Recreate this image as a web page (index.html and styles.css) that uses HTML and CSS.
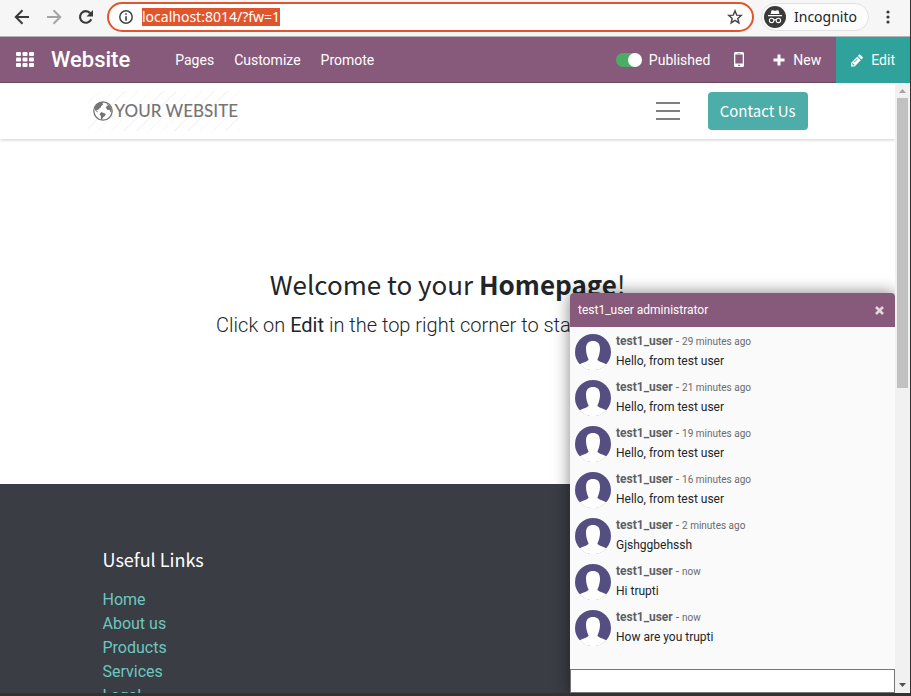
FILE: index.html
```html
<!DOCTYPE html>
<html lang="en">
<head>
<meta charset="utf-8">
<title>Website</title>
<link rel="stylesheet" href="styles.css">
</head>
<body>
<svg class="defs" aria-hidden="true">
  <symbol id="avatar" viewBox="0 0 36 36">
    <circle cx="18" cy="18" r="18" fill="#544f80"/>
    <path fill="#fff" d="M4.600 30.300C8 28.300 13 27.500 13.600 25.400 12 22.500 11 18.500 11 14.500 11 9.300 13.800 7 18 7s7 2.300 7 7.500c0 4-1 8-2.600 10.900.6 2.100 5.600 2.900 9 4.900A18.200 18.200 0 0 1 4.600 30.300z"/>
  </symbol>
</svg>
<div class="browser">
  <div class="toolbar">
    <button class="tool" aria-label="Back"><svg width="16" height="16" viewBox="0 0 16 16" fill="none" stroke="#3a3a3a" stroke-width="2"><path d="M15 8H2M8.500 1.300 1.800 8l6.700 6.700"/></svg></button>
    <button class="tool" aria-label="Forward"><svg width="16" height="16" viewBox="0 0 16 16" fill="none" stroke="#a5a5a5" stroke-width="2"><path d="M1 8h13M7.500 1.300 14.200 8l-6.700 6.700"/></svg></button>
    <button class="tool" aria-label="Reload"><svg width="16" height="16" viewBox="0 0 16 16"><path d="M13.200 10.200A5.800 5.800 0 1 1 12.300 4.200" fill="none" stroke="#3a3a3a" stroke-width="2.200"/><path d="M15 1v6.500H8.500z" fill="#3a3a3a"/></svg></button>
    <div class="address">
      <svg width="14" height="14" viewBox="0 0 14 14"><circle cx="7" cy="7" r="6.200" fill="none" stroke="#444" stroke-width="1.500"/><path d="M6.200 3.200h1.700v1.600H6.200zM6.200 6.200h1.700v4.600H6.200z" fill="#444"/></svg>
      <a class="url" href="#">localhost:8014/?fw=1</a>
      <svg class="star" width="16" height="16" viewBox="0 0 16 16"><path d="m8 1.800 1.700 4.300 4.600.3-3.500 3 1.100 4.500L8 11.400l-3.900 2.500 1.100-4.500-3.500-3 4.600-.3z" fill="none" stroke="#444" stroke-width="1.400"/></svg>
    </div>
    <div class="incognito">
      <svg width="22" height="22" viewBox="0 0 22 22"><circle cx="11" cy="11" r="11" fill="#3a3a3a"/><path d="M7.500 4.600c.8-.6 1.500-.4 2.200-.2.900.3 1.700.3 2.600 0 .7-.2 1.500-.4 2.200.2L15.500 8h-9zM4 9h14v1.300H4z" fill="#fff"/><g fill="none" stroke="#fff" stroke-width="1.100"><circle cx="7.600" cy="14.400" r="2.200"/><circle cx="14.400" cy="14.400" r="2.200"/><path d="M9.800 14c.7-.5 1.700-.5 2.400 0"/></g></svg>
      <span>Incognito</span>
    </div>
    <button class="menu-dots" aria-label="Browser menu"><svg width="4" height="14" viewBox="0 0 4 14" fill="#3a3a3a"><circle cx="2" cy="2" r="1.600"/><circle cx="2" cy="7" r="1.600"/><circle cx="2" cy="12" r="1.600"/></svg></button>
  </div>

  <nav class="navbar">
    <button class="apps" aria-label="Apps"><svg width="18" height="15" viewBox="0 0 18 15" fill="#fff"><rect width="5" height="4" rx="1"/><rect x="6.500" width="5" height="4" rx="1"/><rect x="13" width="5" height="4" rx="1"/><rect y="5.500" width="5" height="4" rx="1"/><rect x="6.500" y="5.500" width="5" height="4" rx="1"/><rect x="13" y="5.500" width="5" height="4" rx="1"/><rect y="11" width="5" height="4" rx="1"/><rect x="6.500" y="11" width="5" height="4" rx="1"/><rect x="13" y="11" width="5" height="4" rx="1"/></svg></button>
    <a class="brand" href="#">Website</a>
    <a class="nav-link" href="#">Pages</a>
    <a class="nav-link" href="#">Customize</a>
    <a class="nav-link" href="#">Promote</a>
    <label class="publish"><input class="switch" type="checkbox" checked>Published</label>
    <button class="phone" aria-label="Mobile preview"><svg width="10" height="15" viewBox="0 0 10 15"><path fill="#fff" fill-rule="evenodd" d="M1.500 0h7A1.500 1.500 0 0 1 10 1.500v12A1.500 1.500 0 0 1 8.500 15h-7A1.500 1.500 0 0 1 0 13.500v-12A1.500 1.500 0 0 1 1.500 0zM1.300 2.500v9h7.400v-9zM3.500.9v.6h3V.9zM5 12.400a.9.900 0 1 0 0 1.800.9.900 0 0 0 0-1.800z"/></svg></button>
    <button class="new"><svg width="12" height="12" viewBox="0 0 12 12"><path d="M4.500.5h3v4h4v3h-4v4h-3v-4h-4v-3h4z" fill="#fff"/></svg>New</button>
    <button class="edit"><svg width="12" height="13" viewBox="0 0 12 13" fill="#fff"><path d="m9.300.8 2.300 2.300c.4.400.4.900 0 1.300l-1.100 1.100-3.600-3.600L8 .8c.4-.4.900-.4 1.300 0z"/><path fill-rule="evenodd" d="m6.200 2.700 3.600 3.600L3.600 12.500H0V8.900zM1.100 9.700v.8h1v1h.8l.6-.6-1.800-1.800zM2.900 7.900l.5.500 3.200-3.200-.5-.5z"/></svg>Edit</button>
  </nav>

  <div class="viewport">
    <div class="page">
      <header class="site-header">
        <div class="container header-row">
          <a class="logo" href="#"><svg width="20" height="20" viewBox="0 0 20 20"><circle cx="10" cy="10" r="9.200" fill="#fff" stroke="#757575" stroke-width="1.300"/><path fill="#757575" d="M2.600 5C4.300 2.600 6.800 1 9.800 1l1 .9-1.600.6 1 1-2 1.600-.4 1.400L5.600 7.900l-.4 1.300-1.400-.4-.3 1 1.400.9-.2.700-2.300-1.600L1.700 7zM8.300 11l2.400.9 2.200 1.200-1 2-1.600.8-1.100 2.600-1.200-.2-.2-3.200-1.300-1.800zM13.200 2.200l3.600 2.700 1.800 3.700-.3 3.200-1.300-1.300-.2-1.500-2.600-.2-1.300-2.200.9-1.700 1.200-.2-.8-.9z"/></svg>YOUR WEBSITE</a>
          <button class="burger" aria-label="Menu"><span></span><span></span><span></span></button>
          <a class="contact" href="#">Contact Us</a>
        </div>
      </header>
      <main class="hero">
        <h1>Welcome to your <b>Homepage</b>!</h1>
        <p>Click on <b>Edit</b> in the top right corner to start designing.</p>
      </main>
      <footer class="footer">
        <div class="container footer-col">
          <h2>Useful Links</h2>
          <ul>
            <li><a href="#">Home</a></li>
            <li><a href="#">About us</a></li>
            <li><a href="#">Products</a></li>
            <li><a href="#">Services</a></li>
            <li><a href="#">Legal</a></li>
          </ul>
        </div>
      </footer>
      <section class="chat">
        <div class="chat-head"><span>test1_user administrator</span>
          <button aria-label="Close chat"><svg width="9" height="9" viewBox="0 0 9 9"><path d="m1 1 7 7M8 1 1 8" stroke="#e3d6df" stroke-width="2.600"/></svg></button></div>
        <div class="messages">
          <div class="message"><svg class="avatar"><use href="#avatar"/></svg><div><p class="meta"><b>test1_user</b> - <small>29 minutes ago</small></p><p>Hello, from test user</p></div></div>
          <div class="message"><svg class="avatar"><use href="#avatar"/></svg><div><p class="meta"><b>test1_user</b> - <small>21 minutes ago</small></p><p>Hello, from test user</p></div></div>
          <div class="message"><svg class="avatar"><use href="#avatar"/></svg><div><p class="meta"><b>test1_user</b> - <small>19 minutes ago</small></p><p>Hello, from test user</p></div></div>
          <div class="message"><svg class="avatar"><use href="#avatar"/></svg><div><p class="meta"><b>test1_user</b> - <small>16 minutes ago</small></p><p>Hello, from test user</p></div></div>
          <div class="message"><svg class="avatar"><use href="#avatar"/></svg><div><p class="meta"><b>test1_user</b> - <small>2 minutes ago</small></p><p>Gjshggbehssh</p></div></div>
          <div class="message"><svg class="avatar"><use href="#avatar"/></svg><div><p class="meta"><b>test1_user</b> - <small>now</small></p><p>Hi trupti</p></div></div>
          <div class="message"><svg class="avatar"><use href="#avatar"/></svg><div><p class="meta"><b>test1_user</b> - <small>now</small></p><p>How are you trupti</p></div></div>
        </div>
        <input class="composer" type="text" aria-label="Message">
      </section>
    </div>
    <div class="scrollbar" aria-hidden="true">
      <svg width="7" height="4" viewBox="0 0 7 4"><path d="M0 4h7L3.500 0z" fill="#a3a3a3"/></svg>
      <div class="track"><div class="thumb"></div></div>
      <svg width="7" height="4" viewBox="0 0 7 4"><path d="M0 0h7L3.500 4z" fill="#505050"/></svg>
    </div>
  </div>
</div>
</body>
</html>
```
FILE: styles.css
```css
* { box-sizing: border-box; }

body, h1, h2, p, ul { margin: 0; padding: 0; }

body {
  font-family: Roboto, "Liberation Sans", sans-serif;
  font-size: 16px;
  line-height: 24px;
  color: #212529;
}

a { color: inherit; text-decoration: none; }

button {
  padding: 0;
  border: 0;
  background: none;
  color: inherit;
  font: inherit;
}

svg { display: block; flex: none; }

.defs { position: absolute; width: 0; height: 0; }

.browser {
  display: flex;
  flex-direction: column;
  height: 100vh;
  overflow: hidden;
  border-right: 1px solid #333132;
  border-bottom: 3px solid #333132;
}

/* Browser toolbar */
.toolbar {
  display: flex;
  align-items: center;
  flex: none;
  height: 37px;
  padding: 0 20px 3px 14px;
  background: #f6f6f6;
  border-bottom: 1px solid #b5b3b5;
  font-family: "Noto Sans", sans-serif;
}

.tool { margin-right: 16px; }

.address {
  display: flex;
  align-items: center;
  flex: 1;
  gap: 9px;
  height: 30px;
  margin-left: -3px;
  padding: 0 9px 0 10px;
  border: 2px solid #e0552c;
  border-radius: 15px;
  background: #fff;
}

.url {
  height: 18px;
  background: #e0552c;
  color: #fff;
  font-size: 14px;
  line-height: 18px;
}

.star { margin-left: auto; }

.incognito {
  display: flex;
  align-items: center;
  gap: 8px;
  height: 28px;
  margin-left: 7px;
  padding: 0 11px 0 2px;
  border: 1px solid #e2e2e2;
  border-radius: 14px;
  background: #fcfcfc;
  font-size: 14px;
}

.menu-dots { margin-left: 17px; }

/* Application bar */
.navbar {
  display: flex;
  align-items: center;
  flex: none;
  height: 46px;
  padding-left: 16px;
  background: #875a7b;
  border-bottom: 1px solid #68465f;
  color: #fff;
  font-size: 14px;
}

.brand {
  margin: 0 35px 0 17px;
  font-size: 22px;
  font-weight: 500;
}

.nav-link { padding: 0 10px; }

.publish {
  display: flex;
  align-items: center;
  gap: 7px;
  margin-left: auto;
}

.switch {
  appearance: none;
  display: flex;
  justify-content: flex-end;
  width: 26px;
  height: 14px;
  margin: 0;
  border-radius: 7px;
  background: #4aad65;
}

.switch::before {
  content: "";
  width: 14px;
  height: 14px;
  border-radius: 50%;
  background: #fff;
}

.phone { margin: 0 29px 0 24px; }

.new, .edit {
  display: flex;
  align-items: center;
  gap: 8px;
}

.edit {
  height: 46px;
  margin: 0 0 -1px 15px;
  padding: 0 15px;
  background: #30a29c;
}

/* Page viewport */
.viewport {
  display: flex;
  flex: 1;
  min-height: 0;
}

.page {
  position: relative;
  flex: 1;
  overflow: hidden;
  background: #fff;
}

.container {
  width: 100%;
  max-width: 720px;
  margin: 0 auto;
}

.site-header {
  padding: 8px 0;
  box-shadow: 0 1px 3px rgba(0, 0, 0, 0.2);
}

.header-row {
  display: flex;
  align-items: center;
  height: 40px;
}

.logo {
  display: flex;
  align-items: center;
  gap: 2px;
  height: 40px;
  padding: 0 2px 0 5px;
  background: repeating-linear-gradient(135deg, #fff 0 8px, #f5f5f5 8px 9px);
  color: #757575;
  font-family: Lato, sans-serif;
  font-size: 17px;
  font-weight: 500;
}

.burger {
  display: grid;
  gap: 6px;
  width: 24px;
  margin: 0 28px 0 auto;
}

.burger span { height: 2px; background: #808080; }

.contact {
  padding: 7px 12px;
  border-radius: 4px;
  background: #4dada9;
  color: #fff;
  font-family: "Noto Sans CJK SC", sans-serif;
  font-size: 15px;
}

.hero {
  padding: 128px 0 144px;
  text-align: center;
}

.hero h1 {
  margin-bottom: 9px;
  font-family: "Noto Sans CJK SC", sans-serif;
  font-size: 26px;
  font-weight: 400;
  line-height: 34px;
}

.hero h1 b { font-weight: 700; }

.hero p {
  font-size: 20px;
  font-weight: 300;
  line-height: 30px;
}

.hero p b { font-weight: 400; }

.footer {
  height: 300px;
  padding-top: 63px;
  background: #3a3d44;
}

.footer-col { padding: 0 15px; }

.footer h2 {
  margin-bottom: 17px;
  color: #fff;
  font-family: "Noto Sans CJK SC", sans-serif;
  font-size: 18px;
  font-weight: 400;
}

.footer ul { list-style: none; color: #6cc8c0; }

/* Live chat window */
.chat {
  position: absolute;
  right: 0;
  bottom: 0;
  display: flex;
  flex-direction: column;
  width: 325px;
  height: 400px;
  border-radius: 4px 4px 0 0;
  background: #fafafa;
  box-shadow: 0 0 16px rgba(0, 0, 0, 0.5);
  font-size: 12px;
  line-height: 18px;
}

.chat-head {
  display: flex;
  align-items: center;
  justify-content: space-between;
  height: 34px;
  padding: 0 11px 0 8px;
  border-radius: 4px 4px 0 0;
  background: #875a7b;
  color: #fff;
}

.messages {
  display: grid;
  align-content: start;
  gap: 6px;
  flex: 1;
  padding: 5px;
}

.message { display: flex; gap: 5px; height: 40px; }

.avatar { width: 36px; height: 36px; margin-top: 2px; }

.meta { margin-bottom: 1px; color: #686b6e; }

.meta b { color: #5c5f62; font-weight: 700; }

.meta small { font-size: 10px; }

.composer {
  width: 100%;
  height: 24px;
  border: 1px solid #767676;
  border-radius: 0;
  background: #fff;
}

/* Scroll bar */
.scrollbar {
  display: flex;
  flex-direction: column;
  align-items: center;
  flex: none;
  gap: 5px;
  width: 15px;
  padding: 6px 2px;
  background: #f1f1f1;
}

.track { flex: 1; width: 11px; }

.thumb { height: 50%; background: #c1c1c1; }
```
